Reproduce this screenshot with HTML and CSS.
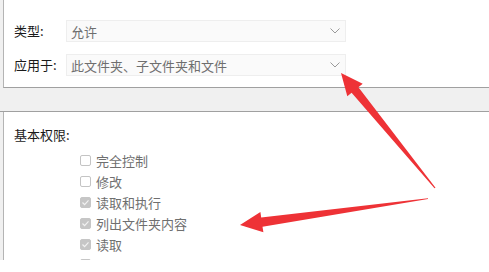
FILE: index.html
```html
<!DOCTYPE html>
<html lang="zh-CN">
<head>
<meta charset="utf-8">
<link rel="stylesheet" href="styles.css">
</head>
<body>
<div class="page">
  <div class="viewport">
    <section class="top">
      <div class="field">
        <span class="label">类型:</span>
        <div class="select"><span>允许</span><svg class="chev" width="10" height="6" viewBox="0 0 10 6"><path d="M0.5 0.5 L5 5 L9.5 0.5" fill="none" stroke="#9a9a9a" stroke-width="1"/></svg></div>
      </div>
      <div class="field">
        <span class="label">应用于:</span>
        <div class="select"><span>此文件夹、子文件夹和文件</span><svg class="chev" width="10" height="6" viewBox="0 0 10 6"><path d="M0.5 0.5 L5 5 L9.5 0.5" fill="none" stroke="#9a9a9a" stroke-width="1"/></svg></div>
      </div>
    </section>
    <div class="band"></div>
    <section class="bottom">
      <div class="heading">基本权限:</div>
      <ul class="perms">
        <li><span class="box"></span>完全控制</li>
        <li><span class="box"></span>修改</li>
        <li><span class="box checked"><svg width="9" height="9" viewBox="0 0 9 9"><path d="M1.5 4.5 L3.6 6.6 L7.5 2.4" fill="none" stroke="#f2f2f2" stroke-width="1.2"/></svg></span>读取和执行</li>
        <li><span class="box checked"><svg width="9" height="9" viewBox="0 0 9 9"><path d="M1.5 4.5 L3.6 6.6 L7.5 2.4" fill="none" stroke="#f2f2f2" stroke-width="1.2"/></svg></span>列出文件夹内容</li>
        <li><span class="box checked"><svg width="9" height="9" viewBox="0 0 9 9"><path d="M1.5 4.5 L3.6 6.6 L7.5 2.4" fill="none" stroke="#f2f2f2" stroke-width="1.2"/></svg></span>读取</li>
        <li><span class="box checked"><svg width="9" height="9" viewBox="0 0 9 9"><path d="M1.5 4.5 L3.6 6.6 L7.5 2.4" fill="none" stroke="#f2f2f2" stroke-width="1.2"/></svg></span>写入</li>
      </ul>
    </section>
  </div>
  <svg class="arrows" width="489" height="272" viewBox="0 0 489 272">
    <polygon fill="#ee3236" points="341,73 362.7,83.7 358.4,87.2 435.5,187.8 434.5,188.2 351.6,92.8 347.3,96.3"/>
    <polygon fill="#ee3236" points="240,225 260.4,212 261.2,217.6 428,198.3 428,199 262.5,226.8 263.4,232.2"/>
  </svg>
</div>
</body>
</html>
```

FILE: styles.css
```css
html, body {
  margin: 0;
  padding: 0;
}
body {
  background: #fff;
  font-family: "Noto Sans CJK SC", "Noto Sans", sans-serif;
  font-size: 13px;
  color: #1a1a1a;
  overflow: hidden;
}
.page {
  position: relative;
  width: 489px;
  height: 272px;
  overflow: hidden;
  background: #fff;
}
.viewport {
  height: 260px;
  overflow: hidden;
  background: #f0f0f0;
}
.top {
  margin-left: 3px;
  height: 88px;
  box-sizing: border-box;
  background: #fff;
  border-left: 1px solid #b4b4b4;
  border-bottom: 1px solid #a0a0a0;
  padding: 20px 0 0 10px;
  display: flex;
  flex-direction: column;
  gap: 12px;
}
.field {
  display: flex;
  align-items: center;
  height: 22px;
}
.label {
  width: 52px;
  line-height: 22px;
}
.select {
  width: 280px;
  height: 22px;
  box-sizing: border-box;
  background: #fafafa;
  border: 1px solid #eeeeee;
  display: flex;
  align-items: center;
  justify-content: space-between;
  padding: 0 5px 0 4px;
  color: #6e6e6e;
}
.chev {
  display: block;
}
.band {
  height: 23px;
  border-bottom: 1px solid #a0a0a0;
}
.bottom {
  margin-left: 3px;
  height: 160px;
  background: #fff;
  border-left: 1px solid #b4b4b4;
  padding: 14px 0 0 10px;
}
.heading {
  line-height: 18px;
  height: 18px;
}
.perms {
  list-style: none;
  margin: 6.6px 0 0 66px;
  padding: 0;
}
.perms li {
  height: 20.8px;
  display: flex;
  align-items: center;
  gap: 5px;
  color: #6f6f6f;
}
.box {
  width: 11px;
  height: 11px;
  box-sizing: border-box;
  border: 1px solid #c4c4c4;
  border-radius: 2px;
  background: #fff;
  display: flex;
  align-items: center;
  justify-content: center;
}
.box.checked {
  background: #c6c6c6;
  border-color: #c6c6c6;
}
.arrows {
  position: absolute;
  left: 0;
  top: 0;
}
```
